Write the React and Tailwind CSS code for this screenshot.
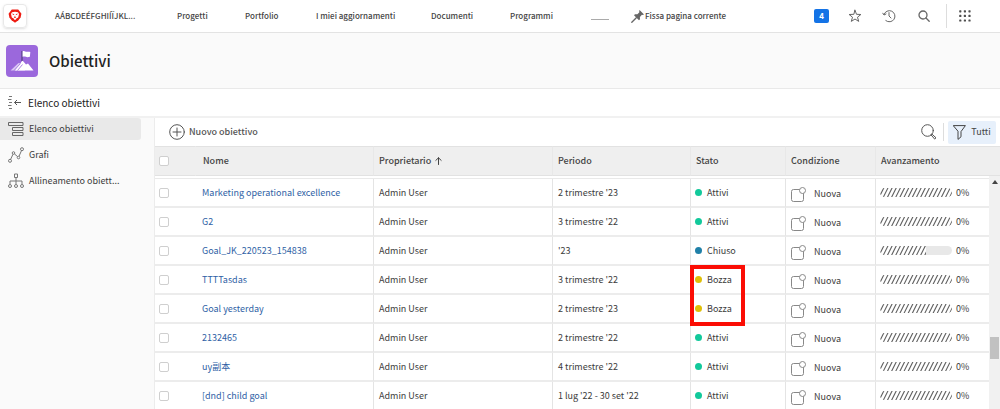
import React from "react";

const NAV = [
  { label: "AÁBCDEÉFGHIÍÏJKL...", cell: "w-[122px]" },
  { label: "Progetti", cell: "w-[68px]" },
  { label: "Portfolio", cell: "w-[71px]" },
  { label: "I miei aggiornamenti", cell: "w-[115px]" },
  { label: "Documenti", cell: "w-[79px]" },
  { label: "Programmi", cell: "w-[81px]" },
];

const STATUS = {
  Attivi: "bg-[#12c99b]",
  Chiuso: "bg-[#2080a8]",
  Bozza: "bg-[#dfbf08]",
};

const ROWS = [
  { name: "Marketing operational excellence", period: "2 trimestre '23", status: "Attivi", fill: 72 },
  { name: "G2", period: "3 trimestre '22", status: "Attivi", fill: 72 },
  { name: "Goal_JK_220523_154838", period: "'23", status: "Chiuso", fill: 46 },
  { name: "TTTTasdas", period: "3 trimestre '22", status: "Bozza", fill: 72, marked: true },
  { name: "Goal yesterday", period: "2 trimestre '23", status: "Bozza", fill: 72 },
  { name: "2132465", period: "2 trimestre '22", status: "Attivi", fill: 72 },
  { name: "uy副本", period: "4 trimestre '22", status: "Attivi", fill: 72 },
  { name: "[dnd] child goal", period: "1 lug '22 - 30 set '22", status: "Attivi", fill: 72 },
];

const stroke = { fill: "none", stroke: "currentColor", strokeLinecap: "round", strokeLinejoin: "round" };

function Logo() {
  return (
    <svg viewBox="0 0 14 14" className="size-[14px]" aria-hidden="true">
      <path d="M3.800.6h6.400L11.400 2l2 2.800-.8 3.800-2.200 2.600L7 13.800l-3.400-2.600L1.400 8.600.6 4.800l2-2.800Z" fill="#ee1c12" />
      <path d="M4 3.200 7 2.800l3 .4 1 1.800-.8 3.400-1.900 1-.5 1.400H6.200l-.5-1.400-1.900-1L3 5Z" fill="#fff" />
      <path d="m4.500 5 1.700.7M9.500 5l-1.700.7M6.300 8h1.400L7 8.700Z" stroke="#ee1c12" strokeWidth=".9" fill="#ee1c12" />
    </svg>
  );
}

function GoalIcon() {
  return (
    <svg viewBox="0 0 32 32" className="size-8 shrink-0" aria-hidden="true">
      <rect width="32" height="32" rx="4" fill="#9b68dc" />
      <path d="M4.500 25.500 12.500 18l2 .500 1.500-2 3 9Z" fill="#d9c6f3" />
      <path d="M9 25.500 16.500 15.500 20 19.500 22 18.500 27.500 25.500Z" fill="#fff" />
      <path d="M8 25.500 14.500 18.500M11.500 25.500 16.500 19.500" stroke="#9b68dc" strokeWidth=".8" />
      <path d="M16 6v10" stroke="#4b3a78" strokeWidth="1.100" />
      <path d="M16.600 6.200c2-1 3 1 4.500.6.900-.2 2-.3 3.200.2l-.4 4.800c-1.600.3-2.600.6-4 0-1-.4-2.300-.5-3.300 0Z" fill="#fff" />
    </svg>
  );
}

function Pin() {
  return (
    <svg viewBox="0 0 14 14" className="size-[14px]" aria-hidden="true">
      <path d="M8.600 1 13 5.400l-1.200.5-.9-.1-2 2.100.1 2.300-1 1L3 6.200l1-1 2.400.1 2-2-.2-1.200Z" fill="#666" />
      <path d="M5.300 8.700.8 13.200" stroke="#666" strokeWidth="1.300" strokeLinecap="round" />
    </svg>
  );
}

function Star() {
  return (
    <svg viewBox="0 0 14 14" className="size-[14px]" {...stroke} strokeWidth="1" aria-hidden="true">
      <path d="M7 1.200 8.500 5.300l4.400.2-3.400 2.700 1.200 4.200L7 10 3.300 12.400l1.200-4.200L1.100 5.500l4.400-.2Z" />
    </svg>
  );
}

function Clock() {
  return (
    <svg viewBox="0 0 14 14" className="size-[14px]" {...stroke} strokeWidth="1" aria-hidden="true">
      <path d="M2 5.500A5.600 5.600 0 1 1 3.800 11.600M.8 4.200 2 6 4 5M7 3.600V7l2 2" />
    </svg>
  );
}

function TopSearch() {
  return (
    <svg viewBox="0 0 12 12" className="size-3" {...stroke} strokeWidth="1.300" aria-hidden="true">
      <circle cx="5" cy="5" r="4" />
      <path d="m8 8 3.200 3.200" />
    </svg>
  );
}

function Apps() {
  return (
    <svg viewBox="0 0 12 12" className="size-3" fill="#4f4f4f" aria-hidden="true">
      {[0, 4.6, 9.2].map((y) => [0, 4.6, 9.2].map((x) => <rect key={`${x}-${y}`} x={x + 0.2} y={y + 0.2} width="2.200" height="2.200" rx=".6" />))}
    </svg>
  );
}

function Collapse() {
  return (
    <svg viewBox="0 0 14 14" className="size-[14px]" fill="none" stroke="#777" strokeWidth="1" aria-hidden="true">
      <path d="M1 .5h3M0 3.500h3.500M1 6.500h3M0 9.500h3.500M1 12.500h3" />
      <path d="M6.500 6.500H13M9 4 6.500 6.500 9 9" stroke="#555" />
    </svg>
  );
}

function ListIcon() {
  return (
    <svg viewBox="0 0 16 16" className="size-4 shrink-0" fill="none" stroke="#666" strokeWidth="1" aria-hidden="true">
      <path d="M.5 1.500h14.500v3H.5zM4.500 6.500h10.500v3H4.500zM4.500 11.500h10.500v3H4.500z" />
    </svg>
  );
}

function GraphIcon() {
  return (
    <svg viewBox="0 0 16 16" className="size-4 shrink-0" fill="none" stroke="#777" strokeWidth="1" aria-hidden="true">
      <circle cx="2" cy="13.800" r="1.500" />
      <circle cx="5.500" cy="6" r="1.300" />
      <circle cx="10.500" cy="10.500" r="1.300" />
      <circle cx="14" cy="2.200" r="1.500" />
      <path d="M2.600 12.400 5 7.200M6.400 6.900 9.600 9.600M11 9.300l2.500-5.700" />
    </svg>
  );
}

function TreeIcon() {
  return (
    <svg viewBox="0 0 16 16" className="size-4 shrink-0" fill="none" stroke="#777" strokeWidth="1" aria-hidden="true">
      <path d="M6.500 1h3v3.500h-3zM8 4.500V11M2 11V8h12v3" />
      <circle cx="2" cy="13" r="1.500" />
      <circle cx="8" cy="13" r="1.500" />
      <circle cx="14" cy="13" r="1.500" />
    </svg>
  );
}

function Check({ label }) {
  return (
    <input
      type="checkbox"
      aria-label={label}
      className="block size-[10px] appearance-none rounded-[2px] border border-[#cfcfcf] bg-white checked:bg-blue-600"
    />
  );
}

function Progress({ fill, id }) {
  const clip = `bar-${id}`;
  return (
    <svg viewBox="0 0 72 9" className="h-[9px] w-[72px] shrink-0" aria-hidden="true">
      <clipPath id={clip}>
        <path d={fill < 72 ? `M4.500 0H${fill}V9H4.500A4.500 4.500 0 0 1 4.500 0Z` : "M4.500 0H67.500A4.500 4.500 0 0 1 67.500 9H4.500A4.500 4.500 0 0 1 4.500 0Z"} />
      </clipPath>
      {fill < 72 && <rect width="72" height="9" rx="4.500" fill="#e8e8e8" />}
      <g clipPath={`url(#${clip})`}>
        <rect width="72" height="9" fill="#fff" />
        {Array.from({ length: 19 }, (_, i) => (
          <path key={i} d={`M${i * 4.15 - 1} 9.500 l5 -10`} stroke="#606060" strokeWidth="1.100" />
        ))}
      </g>
    </svg>
  );
}

function Head({ children, className = "border-l-[#e8e8e8] pl-[5px]" }) {
  return <th className={`h-[30px] border-y border-l border-y-[#e2e2e2] text-left font-medium text-[#444] ${className}`}>{children}</th>;
}

function Row({ row, index }) {
  const line = "h-[29px] border-b-2 border-b-[#ececec] p-0";
  const cell = `${line} border-l border-l-[#e4e4e4]`;
  return (
    <tr>
      <td className={`${line} pl-1`}><Check label={`Seleziona ${row.name}`} /></td>
      <td className={`${line} pl-[7px]`}>
        <a href="#goal" className="text-[#2f5fa5]">{row.name}</a>
      </td>
      <td className={`${cell} pl-[5px]`}>Admin User</td>
      <td className={`${cell} pl-[5px]`}>{row.period}</td>
      <td className={row.marked ? `${cell} relative z-10 pl-1` : `${cell} pl-1`}>
        <span className="flex items-center gap-[5px]">
          <span className={`size-[7px] rounded-full ${STATUS[row.status]}`} />
          {row.status}
        </span>
        {row.marked && <span className="pointer-events-none absolute -top-px -left-px h-[61px] w-[55px] border-4 border-[#fb0d04]" />}
      </td>
      <td className={`${cell} pl-[5px]`}>
        <span className="flex items-center gap-2 pt-[3px]">
          <svg viewBox="0 0 15 15" className="size-[15px]" fill="#fff" stroke="#888" aria-hidden="true">
            <rect x=".5" y="2.500" width="12" height="12" rx="2" />
            <circle cx="11.500" cy="3.500" r="3" />
          </svg>
          Nuova
        </span>
      </td>
      <td className={`${cell} pl-1`}>
        <span className="flex items-center gap-1">
          <Progress fill={row.fill} id={index} />
          0%
        </span>
      </td>
    </tr>
  );
}

export default function App() {
  return (
    <div className="flex min-h-screen flex-col bg-white font-['Noto_Sans_CJK_SC',sans-serif] text-[9px] leading-3 text-[#3c3c3c]">
      <header className="flex h-[33px] items-center border-b border-[#e3e3e3] text-[8px] font-medium text-[#444]">
        <a href="#home" aria-label="Home" className="ml-[3px] flex size-6 items-center justify-center rounded-[4px] border border-[#e8e8e8] shadow-sm">
          <Logo />
        </a>
        <nav className="ml-[28px] flex items-center">
          {NAV.map((n) => (
            <a key={n.label} href="#nav" className={`whitespace-nowrap ${n.cell}`}>{n.label}</a>
          ))}
          <span className="mt-[6px] w-[40px]"><span className="block h-px w-[18px] bg-[#aaa]" /></span>
          <button className="flex items-center whitespace-nowrap font-medium"><Pin />Fissa pagina corrente</button>
        </nav>
        <div className="ml-auto flex items-center text-[#666]">
          <button className="flex h-[14px] w-[15px] items-center justify-center rounded-[2px] bg-[#1473e6] font-bold text-white">4</button>
          <button aria-label="Preferiti" className="ml-[19px]"><Star /></button>
          <button aria-label="Recenti" className="ml-5"><Clock /></button>
          <button aria-label="Cerca" className="ml-[22px]"><TopSearch /></button>
          <span className="ml-4 h-6 w-px bg-[#ddd]" />
          <button aria-label="Applicazioni" className="mr-[29px] ml-3"><Apps /></button>
        </div>
      </header>

      <div className="flex h-14 items-center gap-[11px] border-b border-[#e9e9e9] bg-[#fafafa] pl-[6px]">
        <GoalIcon />
        <h1 className="text-[15px] leading-5 font-medium text-[#222]">Obiettivi</h1>
      </div>

      <div className="flex h-[29px] items-center gap-[6px] border-b-2 border-[#f1f1f1] pl-2 text-[10px] text-[#222]">
        <button aria-label="Comprimi pannello"><Collapse /></button>
        <h2>Elenco obiettivi</h2>
      </div>

      <div className="flex flex-1">
        <nav className="flex w-[154px] shrink-0 flex-col bg-[#fafafa]">
          <a href="#list" className="mr-[13px] flex h-[22px] items-center gap-[5px] rounded-r-[3px] bg-[#e9e9e9] pl-2"><ListIcon />Elenco obiettivi</a>
          <a href="#graphs" className="flex h-[30px] items-center gap-[5px] pl-2"><GraphIcon />Grafi</a>
          <a href="#alignment" className="flex h-[22px] items-center gap-[5px] pl-2"><TreeIcon />Allineamento obiett...</a>
        </nav>

        <main className="flex min-w-0 flex-1 flex-col border-l border-[#ececec]">
          <div className="flex h-[28px] items-center pr-1 pl-[14px]">
            <button className="flex items-center gap-1 font-medium text-[#555]">
              <svg viewBox="0 0 16 16" className="size-4" {...stroke} strokeWidth="1" aria-hidden="true">
                <circle cx="8" cy="8" r="7.300" />
                <path d="M8 4v8M4 8h8" />
              </svg>
              Nuovo obiettivo
            </button>
            <button aria-label="Cerca obiettivi" className="ml-auto text-[#555]">
              <svg viewBox="0 0 16 16" className="size-4" {...stroke} strokeWidth="1" aria-hidden="true">
                <circle cx="6.500" cy="6.500" r="5.800" />
                <path d="m11 10.200 4 3.600-1.300 1.300-3.500-4Z" />
              </svg>
            </button>
            <span className="ml-[6px] h-[18px] w-px bg-[#ddd]" />
            <button className="ml-1 flex h-[23px] w-12 items-center justify-center gap-[5px] rounded-[2px] bg-[#e7f0fb] text-[#444]">
              <svg viewBox="0 0 13 15" className="h-[15px] w-[13px]" {...stroke} strokeWidth="1" aria-hidden="true">
                <path d="M.6.600h11.800L8 6.600v5.200l-3 2.600V6.600Z" />
              </svg>
              Tutti
            </button>
          </div>

          <div className="flex flex-1">
            <table className="min-w-0 flex-1 table-fixed border-separate border-spacing-0 whitespace-nowrap">
              <colgroup>
                <col className="w-10" />
                <col />
                <col className="w-[179px]" />
                <col className="w-[138px]" />
                <col className="w-[95px]" />
                <col className="w-[90px]" />
                <col className="w-[114px]" />
              </colgroup>
              <thead className="bg-[#efefef]">
                <tr>
                  <th className="border-y border-[#e2e2e2] p-0 pl-1"><Check label="Seleziona tutto" /></th>
                  <Head className="border-l-transparent pl-[7px]">Nome</Head>
                  <Head>
                    <span className="flex items-center gap-1">
                      Proprietario
                      <svg viewBox="0 0 7 8" className="h-2 w-[7px]" {...stroke} strokeWidth="1" aria-hidden="true">
                        <path d="M3.500 7.500V.8M.8 3.400 3.500.8l2.700 2.600" />
                      </svg>
                    </span>
                  </Head>
                  <Head>Periodo</Head>
                  <Head>Stato</Head>
                  <Head>Condizione</Head>
                  <Head>Avanzamento</Head>
                </tr>
              </thead>
              <tbody>
                <tr aria-hidden="true">
                  <td colSpan={7} className="h-[3px] border-b border-[#e9e9e9] p-0" />
                </tr>
                {ROWS.map((row, i) => <Row key={row.name} row={row} index={i} />)}
              </tbody>
            </table>
            <div className="flex w-[11px] shrink-0 flex-col" aria-hidden="true">
              <div className="h-[30px] border-y border-[#e2e2e2] bg-[#efefef]" />
              <div className="flex flex-1 flex-col items-center bg-[#f1f1f1] pt-1">
                <svg viewBox="0 0 6 4" className="h-1 w-[6px]"><path d="M0 4 3 0l3 4Z" fill="#444" /></svg>
                <div className="mt-[153px] h-[22px] w-[9px] bg-[#c1c1c1]" />
              </div>
            </div>
          </div>
        </main>
      </div>
    </div>
  );
}
